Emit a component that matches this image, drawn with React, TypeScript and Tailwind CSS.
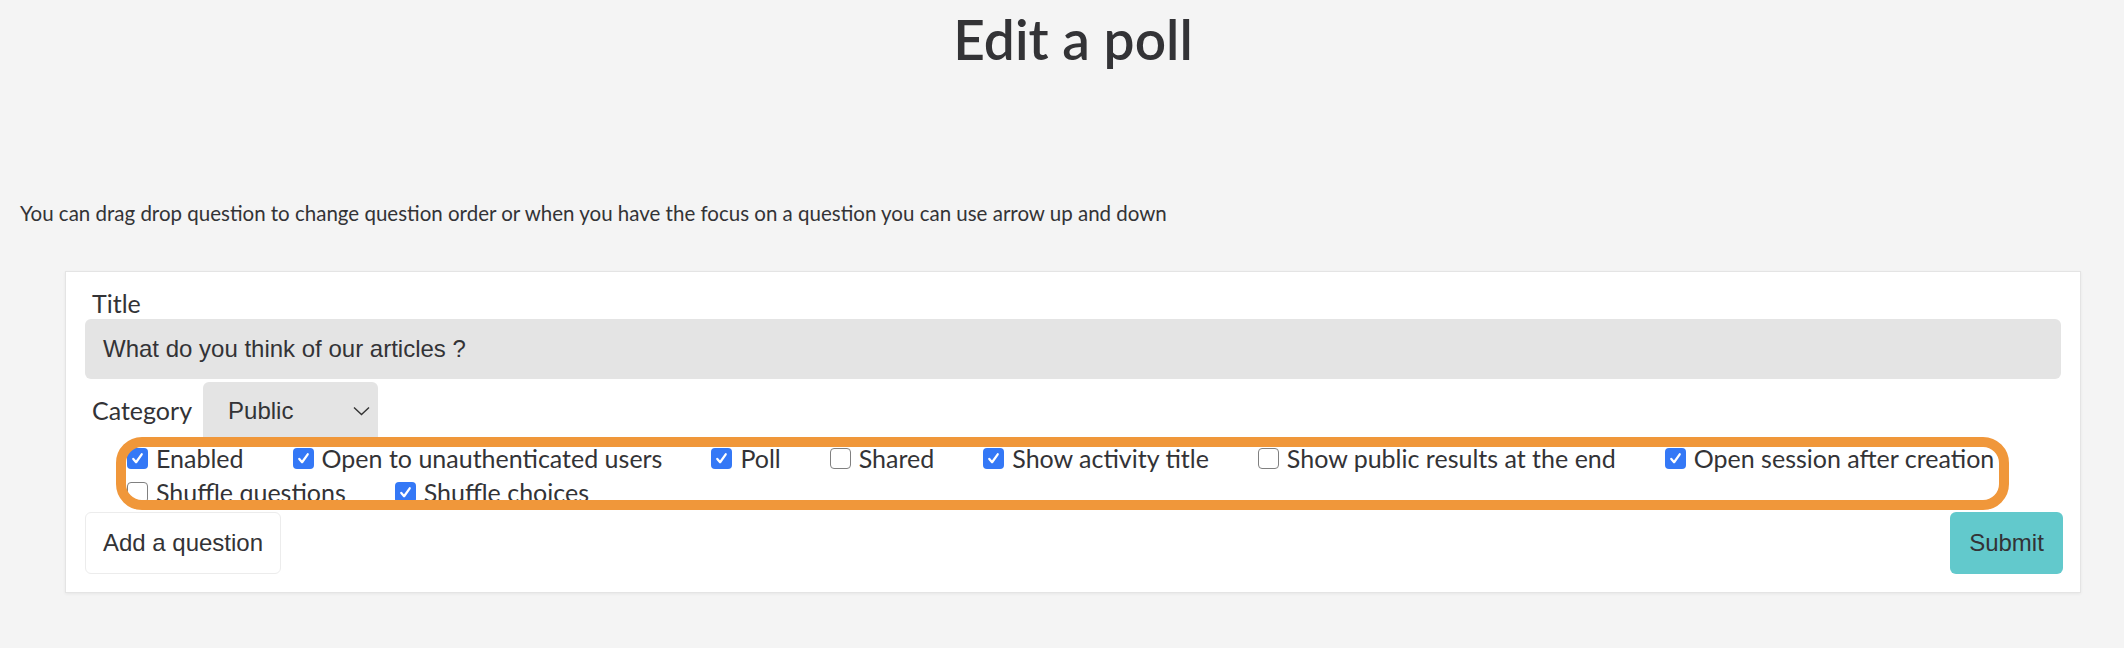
import React from "react";

const lato = "font-['Lato','Open_Sans',sans-serif]";
const arial = "font-['Liberation_Sans',Arial,sans-serif]";

function Box({ checked }: { checked: boolean }) {
  if (checked) {
    return (
      <span className="flex h-[21px] w-[21px] shrink-0 items-center justify-center rounded-[4px] bg-[#3478f6]">
        <svg width="15" height="15" viewBox="0 0 16 16" fill="none">
          <path d="M3.5 8.5 L6.5 12 L12.5 3.5" stroke="white" strokeWidth="2.4" strokeLinecap="round" strokeLinejoin="round" />
        </svg>
      </span>
    );
  }
  return <span className="h-[21px] w-[21px] shrink-0 rounded-[4px] border-[1.5px] border-[#808080] bg-white" />;
}

const items: [string, boolean][] = [
  ["Enabled", true],
  ["Open to unauthenticated users", true],
  ["Poll", true],
  ["Shared", false],
  ["Show activity title", true],
  ["Show public results at the end", false],
  ["Open session after creation", true],
  ["Shuffle questions", false],
  ["Shuffle choices", true],
];

export default function App() {
  return (
    <div className="min-h-[648px] bg-[#f4f4f4] text-[#333336]">
      <h1 className={`${lato} pt-[6px] pl-[22px] text-center text-[55px] font-semibold leading-[1.2]`}>Edit a poll</h1>
      <p className={`${lato} mt-[129px] pl-[20px] text-[20.5px] leading-[24px]`}>
        You can drag drop question to change question order or when you have the focus on a question you can use arrow up and down
      </p>
      <div className="relative ml-[65px] mt-[46px] w-[2016px] border border-[#e4e4e4] bg-white px-[19px] pt-[17px] pb-[18px] shadow-[0_1px_3px_rgba(0,0,0,0.06)]">
        <div className={`${lato} mb-[1px] pl-[7px] text-[25px] leading-[28.8px]`}>Title</div>
        <div className={`${arial} flex h-[60px] items-center rounded-[6px] bg-[#e4e4e4] px-[18px] text-[24px]`}>
          What do you think of our articles ?
        </div>
        <div className="mt-[3px] flex items-center">
          <span className={`${lato} pl-[7px] text-[25px] leading-[28.8px]`}>Category</span>
          <div className={`${arial} ml-[11px] flex h-[58px] w-[175px] items-center justify-between rounded-t-[6px] bg-[#e4e4e4] pl-[25px] pr-[8px] text-[24px]`}>
            <span>Public</span>
            <svg width="17" height="10" viewBox="0 0 17 10" fill="none">
              <path d="M1 1.5 L8.5 8.5 L16 1.5" stroke="#333" strokeWidth="1.4" />
            </svg>
          </div>
        </div>
        <div className={`${lato} mt-[2px] flex flex-wrap gap-x-[49px] pl-[42px] text-[25px]`}>
          {items.map(([label, checked]) => (
            <label key={label} className="flex h-[34px] items-center gap-[8px]">
              <Box checked={checked} />
              <span className="leading-[28.8px]">{label}</span>
            </label>
          ))}
        </div>
        <div className={`${arial} mt-[2px] flex justify-between text-[24px]`}>
          <button className="h-[62px] w-[196px] rounded-[6px] border border-[#ececec] bg-white text-[#333336]">Add a question</button>
          <button className="mr-[-2px] h-[62px] w-[113px] rounded-[6px] bg-[#62c9cc] text-[#333336]">Submit</button>
        </div>
        <div className="pointer-events-none absolute left-[50px] top-[165px] h-[73px] w-[1893px] rounded-[26px] border-[10px] border-[#f0973a]" />
      </div>
    </div>
  );
}
